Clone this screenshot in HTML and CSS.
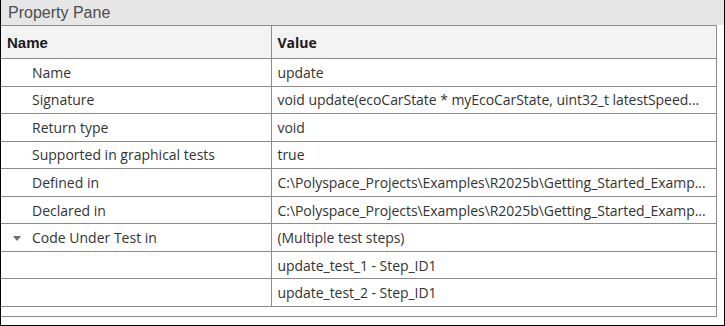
FILE: index.html
```html
<!DOCTYPE html>
<html lang="en">
<head>
    <meta charset="UTF-8">
    <link rel="stylesheet" href="styles.css">
    <title>Property Pane</title>
</head>
<body>
    <div class="pane">
        <div class="title">Property Pane</div>
        <div class="grid-wrap">
            <table class="props">
                <colgroup>
                    <col class="c-name">
                    <col class="c-value">
                </colgroup>
                <thead>
                    <tr>
                        <th class="h-name">Name</th>
                        <th class="h-value">Value</th>
                    </tr>
                </thead>
                <tbody>
                    <tr><td class="name">Name</td><td class="val">update</td></tr>
                    <tr><td class="name">Signature</td><td class="val">void update(ecoCarState * myEcoCarState, uint32_t latestSpeed...</td></tr>
                    <tr><td class="name">Return type</td><td class="val">void</td></tr>
                    <tr><td class="name">Supported in graphical tests</td><td class="val">true</td></tr>
                    <tr><td class="name">Defined in</td><td class="val">C:\Polyspace_Projects\Examples\R2025b\Getting_Started_Examp...</td></tr>
                    <tr><td class="name">Declared in</td><td class="val">C:\Polyspace_Projects\Examples\R2025b\Getting_Started_Examp...</td></tr>
                    <tr><td class="name group"><span class="caret"></span>Code Under Test in</td><td class="val">(Multiple test steps)</td></tr>
                    <tr><td class="name"></td><td class="val">update_test_1 - Step_ID1</td></tr>
                    <tr><td class="name"></td><td class="val">update_test_2 - Step_ID1</td></tr>
                </tbody>
            </table>
            <div class="hscroll"></div>
        </div>
    </div>
</body>
</html>
```

FILE: styles.css
```css
body {
  margin: 0;
  background: #fff;
}
.pane {
  width: 723px;
  height: 325px;
  border-left: 1px solid #000;
  border-right: 1px solid #000;
  border-bottom: 1px solid #000;
  display: flex;
  flex-direction: column;
}
.title {
  height: 25px;
  background: #e6e6e6;
  font-family: "Liberation Sans", Arial, sans-serif;
  font-size: 16px;
  color: #4d4d4d;
  padding-left: 7px;
  line-height: 25px;
}
.grid-wrap {
  margin-right: 7px;
}
.props {
  width: 100%;
  table-layout: fixed;
  border-collapse: collapse;
  font-family: "Open Sans", sans-serif;
  font-size: 14px;
  color: #333;
}
.c-name {
  width: 270px;
}
.props th {
  background: #f3f3f3;
  height: 32px;
  text-align: left;
  border: 1px solid #8c8c8c;
  color: #1a1a1a;
  padding: 0 6px;
}
.h-name {
  font-family: "Liberation Sans", Arial, sans-serif;
  font-size: 15px;
  padding-left: 7px;
}
.h-value {
  font-size: 14px;
}
.props td {
  height: 26.55px;
  border: 1px solid #8c8c8c;
  padding: 0 6px;
  white-space: nowrap;
  overflow: hidden;
}
.props td.val {
  padding-right: 1px;
  letter-spacing: -0.05px;
}
.props td.name {
  border-left: none;
  padding-left: 31px;
}
.props th.h-name {
  border-left: none;
}
.props td.group {
  padding-left: 12px;
}
.caret {
  display: inline-block;
  width: 0;
  height: 0;
  border-left: 4px solid transparent;
  border-right: 4px solid transparent;
  border-top: 5px solid #6e6e6e;
  margin-right: 11px;
  vertical-align: middle;
  position: relative;
  top: -1px;
}
.hscroll {
  height: 9px;
  border-right: 1px solid #8c8c8c;
  border-bottom: 1px solid #8c8c8c;
}
```
